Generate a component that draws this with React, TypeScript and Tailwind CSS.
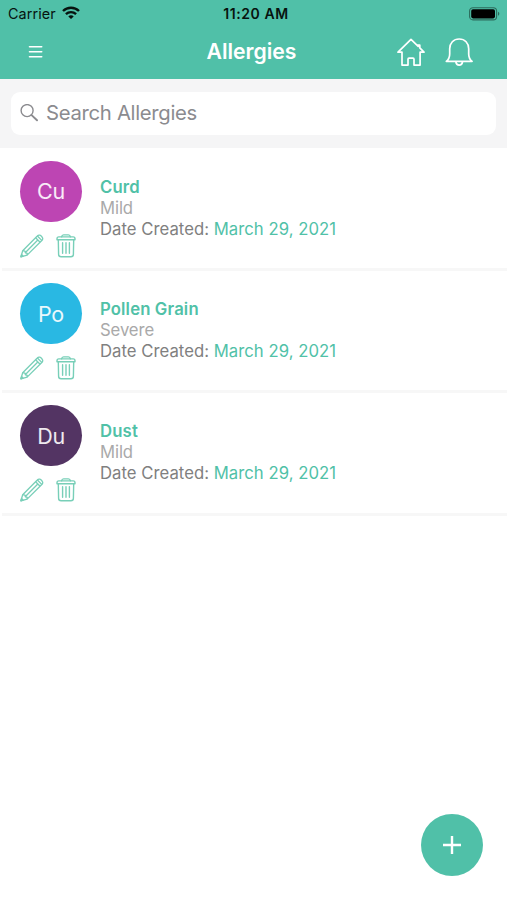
interface Allergy {
    name: string;
    severity: string;
    created: string;
    color: string;
}

const allergies: Allergy[] = [
    { name: 'Curd', severity: 'Mild', created: 'March 29, 2021', color: 'bg-[#bd45b3]' },
    { name: 'Pollen Grain', severity: 'Severe', created: 'March 29, 2021', color: 'bg-[#29b8e3]' },
    { name: 'Dust', severity: 'Mild', created: 'March 29, 2021', color: 'bg-[#533463]' },
];

function WifiIcon() {
    return (
        <svg width="18" height="14" viewBox="0 0 18 14" fill="none" stroke="#07130f" strokeWidth="2.4">
            <path d="M1 5C5.5.7 12.5.7 17 5" />
            <path d="M3.9 8.1c2.9-2.7 7.3-2.7 10.2 0" />
            <path d="M9 13 6.3 10.4c1.5-1.4 3.9-1.4 5.4 0Z" fill="#07130f" stroke="none" />
        </svg>
    );
}

function BatteryIcon() {
    return (
        <svg width="32" height="14" viewBox="0 0 32 14" fill="none">
            <rect x="0.6" y="0.7" width="27" height="12.2" rx="3.4" stroke="#2c6b5c" strokeWidth="1.1" />
            <rect x="2.2" y="2.2" width="23.8" height="9.2" rx="1.8" fill="#000" />
            <path d="M29 4.8c1.8.6 1.8 3.4 0 4Z" fill="#2c6b5c" />
        </svg>
    );
}

function MenuIcon() {
    return (
        <svg width="15" height="14" viewBox="0 0 15 14" stroke="#fff" strokeWidth="1.6" strokeLinecap="round">
            <path d="M1.5 1.7h12.2M1.5 6.7h12.2M1.5 11.7h12.2" />
        </svg>
    );
}

function HomeIcon() {
    return (
        <svg width="28" height="28" viewBox="0 0 28 28" fill="none" stroke="#fff" strokeWidth="1.7" strokeLinejoin="round" strokeLinecap="round">
            <path d="M1 14.2 14 1.3l7.2 7V7.2h1.6v2.7l4.2 4.3h-3.9v12.9h-6.1v-5.9c0-.7-.3-1-1-1h-4c-.7 0-1 .3-1 1v5.9H5V14.2Z" />
        </svg>
    );
}

function BellIcon() {
    return (
        <svg width="28" height="28" viewBox="0 0 28 28" fill="none" stroke="#fff" strokeWidth="1.7" strokeLinejoin="round" strokeLinecap="round">
            <path d="M1.3 23.3c2.9-2.3 3.4-3.8 3.4-7.4v-5.1C4.7 5 8.5 1 14.2 1s9.5 4 9.5 9.8v5.1c0 3.6.5 5.1 3.4 7.4Z" />
            <path d="M10.9 23.8c.5 4.3 6.1 4.3 6.6 0" />
        </svg>
    );
}

function SearchIcon() {
    return (
        <svg width="18" height="18" viewBox="0 0 18 18" fill="none" stroke="#8b8b8f" strokeLinecap="round">
            <circle cx="7.1" cy="6.6" r="6" strokeWidth="1.4" />
            <path d="m11.6 11.1 5.4 5.2" strokeWidth="1.9" />
        </svg>
    );
}

function PencilIcon() {
    return (
        <svg width="24" height="24" viewBox="0 0 24 24" fill="none" stroke="#78cfb8" strokeWidth="1.3" strokeLinejoin="round">
            <path d="m.9 22.8 1.8-6.1L17.3 2c.7-.8 1.6-1.2 2.6-.8 1.3.5 2.2 1.4 2.7 2.7.3 1 0 1.9-.8 2.6L7.1 21.1Z" />
            <path d="m2.7 16.7 2.3.4.4 1.8 1.9.4-.2 1.8M15.6 3.8l4.5 4.5M17.4 2 22 6.6M5.2 18.7 17.8 6" />
            <path d="m.9 22.8.7-2.3 1.6 1.6Z" fill="#78cfb8" />
        </svg>
    );
}

function TrashIcon() {
    return (
        <svg width="20" height="24" viewBox="0 0 20 24" fill="none" stroke="#78cfb8" strokeWidth="1.4" strokeLinejoin="round" strokeLinecap="round">
            <path d="M5.6 2.9c.2-1.3.9-2 2-2h4.8c1.1 0 1.8.7 2 2" />
            <path d="M1 4.8c0-1.2.7-1.9 1.8-1.9h14.4c1.1 0 1.8.7 1.8 1.9v.9H1Z" />
            <path d="m2.3 5.7.3 14.6c0 1.6.9 2.5 2.5 2.5h9.8c1.6 0 2.5-.9 2.5-2.5l.3-14.6" />
            <path d="M6.6 8.8v10.4M10 8.8v10.4M13.4 8.8v10.4" />
        </svg>
    );
}

function StatusBar() {
    return (
        <div className="grid h-[27px] grid-cols-[1fr_auto_1fr] items-center pl-[8px] pr-[6px] text-[#07130f]">
            <div className="flex items-center gap-[6px]">
                <span className="text-[14.4px] tracking-[0.1px]">Carrier</span>
                <WifiIcon />
            </div>
            <span className="pl-[3px] text-[14px] font-semibold tracking-[0.55px]">11:20 AM</span>
            <div className="flex justify-end">
                <BatteryIcon />
            </div>
        </div>
    );
}

function AllergyRow({ allergy }: { allergy: Allergy }) {
    return (
        <li className="ml-[2px] flex h-[122.2px] gap-[18px] border-b-[3px] border-[#f7f7f7] pl-[18px] pt-[12px]">
            <div className="w-[62px]">
                <div className={`flex h-[61px] w-[62px] items-center justify-center rounded-full text-[21.5px] tracking-[-0.3px] text-white/90 ${allergy.color}`}>
                    {allergy.name.slice(0, 2)}
                </div>
                <div className="mt-[12px] flex gap-[12px]">
                    <PencilIcon />
                    <TrashIcon />
                </div>
            </div>
            <div className="pt-[16px] text-[16.7px] leading-[21px]">
                <div className="font-semibold tracking-[0.15px] text-[#50c1a7]">{allergy.name}</div>
                <div className="tracking-[-0.1px] text-[#a9a9a9]">{allergy.severity}</div>
                <div className="tracking-[0.03px] text-[#808080]">
                    Date Created: <span className="text-[#50c1a7]">{allergy.created}</span>
                </div>
            </div>
        </li>
    );
}

export default function App() {
    return (
        <div className="relative h-[900px] w-[507px] overflow-hidden bg-white font-['Inter',sans-serif]">
            <header className="h-[79px] bg-[#50c0a8]">
                <StatusBar />
                <div className="grid h-[50px] grid-cols-[1fr_auto_1fr] items-center pl-[28px] pr-[34px]">
                    <MenuIcon />
                    <h1 className="pl-[2px] text-[21.2px] font-semibold text-white">Allergies</h1>
                    <div className="flex justify-end gap-[20px]">
                        <HomeIcon />
                        <BellIcon />
                    </div>
                </div>
            </header>
            <div className="h-[69px] bg-[#f5f5f6] px-[11px] pt-[13px]">
                <div className="flex h-[43px] items-center gap-[8px] rounded-[9px] bg-white pb-[1px] pl-[9px]">
                    <SearchIcon />
                    <span className="text-[20.3px] tracking-[-0.3px] text-[#8b8b8f]">Search Allergies</span>
                </div>
            </div>
            <ul className="pt-[1px]">
                {allergies.map((allergy) => (
                    <AllergyRow key={allergy.name} allergy={allergy} />
                ))}
            </ul>
            <button className="absolute bottom-[24px] right-[24px] flex h-[62px] w-[62px] items-center justify-center rounded-full bg-[#50c0a8]" aria-label="Add allergy">
                <svg width="18" height="18" viewBox="0 0 18 18" stroke="#fff" strokeWidth="2.4">
                    <path d="M9 0v18M0 9h18" />
                </svg>
            </button>
        </div>
    );
}
